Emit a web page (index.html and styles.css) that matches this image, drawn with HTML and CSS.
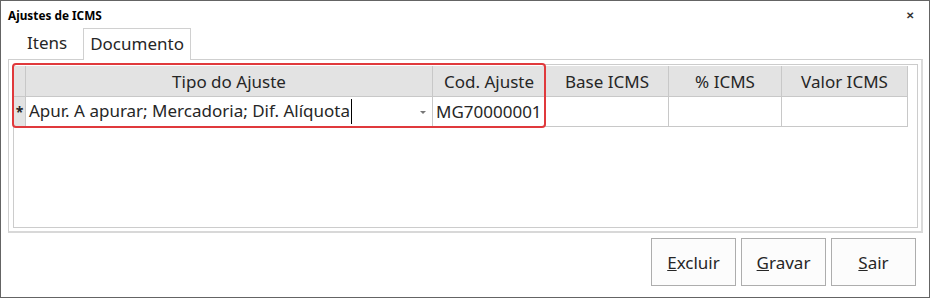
FILE: index.html
```html
<!DOCTYPE html>
<html lang="pt-BR">
<head>
    <meta charset="UTF-8">
    <title>Ajustes de ICMS</title>
    <link rel="stylesheet" href="styles.css">
</head>
<body>

    <div class="window">
        <div class="titlebar">
            <span class="title">Ajustes de ICMS</span>
            <span class="close">&#x2715;</span>
        </div>

        <div class="tabs">
            <div class="tab">Itens</div>
            <div class="tab active">Documento</div>
        </div>

        <div class="panel">
            <div class="grid">
                <table>
                    <tr class="head">
                        <th class="rowhead"></th>
                        <th class="c-tipo">Tipo do Ajuste</th>
                        <th class="c-cod">Cod. Ajuste</th>
                        <th class="c-base">Base ICMS</th>
                        <th class="c-pct">% ICMS</th>
                        <th class="c-valor">Valor ICMS</th>
                    </tr>
                    <tr class="row">
                        <td class="rowhead">*</td>
                        <td class="combo">
                            <span class="value">Apur. A apurar; Mercadoria; Dif. Alíquota<span class="caret"></span></span>
                            <span class="arrow"></span>
                        </td>
                        <td class="cod">MG70000001</td>
                        <td></td>
                        <td></td>
                        <td></td>
                    </tr>
                </table>
                <div class="highlight"></div>
            </div>
        </div>

        <div class="actions">
            <button class="btn"><u>E</u>xcluir</button>
            <button class="btn"><u>G</u>ravar</button>
            <button class="btn"><u>S</u>air</button>
        </div>
    </div>

</body>
</html>
```

FILE: styles.css
```css
body { margin: 0; background: #fff; font-family: "Noto Sans", "Open Sans", sans-serif; color: #262626; }
.window { width: 930px; height: 298px; box-sizing: border-box; border: 1px solid #646464; background: #fff; display: flex; flex-direction: column; }

.titlebar { height: 27px; display: flex; align-items: center; justify-content: space-between; padding: 0 15px 0 7px; flex: none; }
.title { font-size: 11.8px; font-weight: bold; color: #000; }
.close { font-size: 10px; font-weight: bold; color: #333; }

.tabs { display: flex; height: 32px; padding-left: 13px; flex: none; margin-bottom: -1px; }
.tab { font-size: 17px; line-height: 30px; padding: 0 16px 0 13px; }
.tab.active { border: 1px solid #d0d0d0; border-bottom: none; background: #fff; padding: 0 6px; position: relative; z-index: 1; }

.panel { margin: 0 6px 0 7px; height: 174px; box-sizing: border-box; border: 1px solid #cfcfcf; border-right-width: 2px; border-bottom-width: 2px; border-right-color: #dadada; border-bottom-color: #d8d8d8; padding: 4px 3px 3px 4px; flex: none; }
.grid { position: relative; height: 100%; box-sizing: border-box; border: 1px solid #cccccc; padding-top: 1px; }

table { border-collapse: collapse; font-size: 17px; }
th { background: #e3e3e3; font-weight: normal; height: 30px; padding: 0; border-right: 1px solid #c8c8c8; border-bottom: 1px solid #c8c8c8; text-align: center; }
td { height: 29px; padding: 0; border-right: 1px solid #c8c8c8; border-bottom: 1px solid #c8c8c8; }
.rowhead { width: 11px; background: #e3e3e3; font-weight: bold; text-align: center; font-size: 14px; }
.c-tipo { width: 406px; }
.c-cod { width: 112px; }
.c-base { width: 122px; }
.c-pct { width: 112px; }
.c-valor { width: 125px; }

.combo { position: relative; padding-left: 3px; white-space: nowrap; }
.caret { display: inline-block; width: 1px; height: 25px; background: #000; vertical-align: middle; margin-left: 1px; }
.arrow { position: absolute; right: 6px; top: 14px; border-left: 3px solid transparent; border-right: 3px solid transparent; border-top: 3px solid #777; }
.cod { padding-left: 3px; }

.highlight { position: absolute; left: -2px; top: -2px; width: 530px; height: 61px; border: 2px solid #e0393c; border-radius: 4px; }

.actions { display: flex; justify-content: flex-end; gap: 5px; padding: 5px 13px 0 0; }
.btn { width: 85px; height: 48px; background: #fcfcfc; border: 1px solid #adadad; font-family: inherit; font-size: 17px; color: #262626; padding: 0; }
```
